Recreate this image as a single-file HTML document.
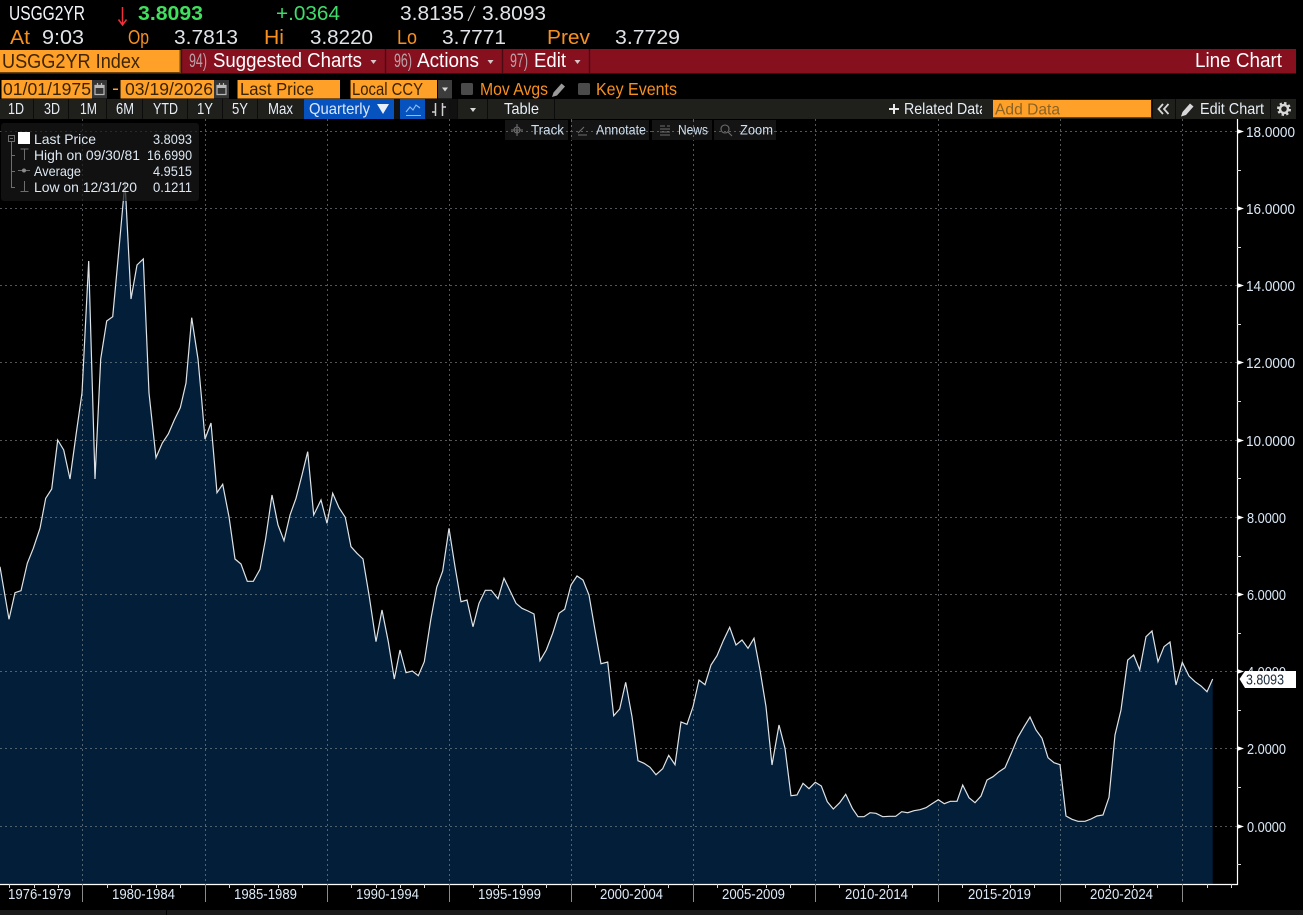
<!DOCTYPE html>
<html><head><meta charset="utf-8"><style>
html,body{margin:0;padding:0;background:#000;overflow:hidden}
svg{display:block}
text{font-family:"Liberation Sans",sans-serif}
</style></head><body>
<svg width="1303" height="915" viewBox="0 0 1303 915" xmlns="http://www.w3.org/2000/svg">
<defs><clipPath id="rd"><rect x="900" y="99" width="82" height="20"/></clipPath></defs>
<rect width="1303" height="915" fill="#000"/>

<!-- chart fill -->
<polygon fill="#021e39" points="0,884 0,566.7 9,619.3 15,592.7 21,590.7 27.3,563.3 33.3,548.3 40,528.3 45.7,498.3 51.7,489 57.7,440 63.7,450 70,479 76,435 82,393 88.7,261 95,479 100.7,359 106.7,321 112.7,316.7 118.7,252 125,181.7 131,299 137,265 143.3,259 149,393 156,457.7 162.3,443 168.3,434 174.3,420 180.3,407.7 186,383 191.7,317.7 198,359 201.7,400 205,439 211,423 217,492.7 222.7,484.3 229,516.7 235,559 241,564 247.3,581.3 253.3,581.3 260,569.3 265.7,538.3 272,495 278,525 284,540.7 290,515 296,498.3 302,475 307.7,451.7 313.7,515 321,500 327,523.3 332.7,493.3 339,507.7 345.3,517.3 351,546.7 357,553.3 363,559 369.3,596.7 376,641.7 382,610 388.3,641.7 394.3,679 400,650 406,672.7 412.3,671 418.3,675.7 424.3,661.7 430.7,620 436.7,587.3 442.7,571 449,528.3 455,566.7 461,601.7 467,600 473,626.7 479,603.3 485.3,590.3 491.3,590.3 498,598.7 504,578.3 510,590.7 516,603.3 522,608.3 528,611 534,614 540,660.7 546.3,650 552.7,633.3 559,613.3 564.7,609.3 571,585 577,576 583,580 589,595 595,630 601,663.7 607.7,662 613.7,715.7 619.7,709 625.7,682.3 632,716.7 638,760.7 644,763.3 650,767.3 656,774.7 662.7,768.7 668.7,755.3 675,764.7 681,722 687,724.3 693,706.7 699,680 705,684.7 711,665 717,655.7 723.3,640.7 729.7,627.3 736,645 742,640 748,648.3 754,638.3 760,670 766,706.7 772,765 779,725 785,748.3 791,795.7 797,795 803,783.3 809,788.7 815.3,782.3 821.3,786 827.3,801.7 833.3,809 839.7,802.7 845.7,794.3 852.3,808.3 858,816.7 864,816.7 870,812.7 876,813.3 882.7,816.7 889.3,816.3 895.7,816.3 901.7,811.7 907.7,812.7 914,810.7 920,809.7 926,807.7 932,803.7 938.3,799.7 944.3,803.7 950.3,801.3 957,801.3 962.7,785 969,797.7 975,802.7 981,796 987,780 993,776.7 999,771.7 1005,767.7 1011.3,753.3 1017.7,737.7 1023.7,727.3 1030,717 1036,730 1042,738.3 1048,757.7 1054,762.7 1060,764.7 1066,816 1072,819.3 1078,821.3 1085,821.3 1091,819 1097,816 1103,815 1109,797.3 1115,735 1121,710 1127.7,660 1133.7,655 1139.7,670 1146,636.7 1152,631 1158,661.7 1164,646.7 1170,642 1176,685 1182.3,662.3 1189,676 1195,681.7 1201,686 1207,691.7 1212.7,679 1212.7,884"/>

<!-- grid -->
<g stroke="#8a8f94" stroke-opacity=".6" stroke-width="1" stroke-dasharray="2 3" fill="none">
<path d="M0 131.5H1237M0 208.5H1237M0 285.5H1237M0 362.5H1237M0 440.5H1237M0 517.5H1237M0 594.5H1237M0 671.5H1237M0 748.5H1237M0 826.5H1237"/>
<path d="M82.5 119V884M205.5 119V884M327.5 119V884M449.5 119V884M571.5 119V884M693.5 119V884M815.5 119V884M938.5 119V884M1060.5 119V884M1182.5 119V884"/>
</g>

<!-- line -->
<polyline fill="none" stroke="#dfe3e6" stroke-width="1.2" stroke-linejoin="miter" points="0,566.7 9,619.3 15,592.7 21,590.7 27.3,563.3 33.3,548.3 40,528.3 45.7,498.3 51.7,489 57.7,440 63.7,450 70,479 76,435 82,393 88.7,261 95,479 100.7,359 106.7,321 112.7,316.7 118.7,252 125,181.7 131,299 137,265 143.3,259 149,393 156,457.7 162.3,443 168.3,434 174.3,420 180.3,407.7 186,383 191.7,317.7 198,359 201.7,400 205,439 211,423 217,492.7 222.7,484.3 229,516.7 235,559 241,564 247.3,581.3 253.3,581.3 260,569.3 265.7,538.3 272,495 278,525 284,540.7 290,515 296,498.3 302,475 307.7,451.7 313.7,515 321,500 327,523.3 332.7,493.3 339,507.7 345.3,517.3 351,546.7 357,553.3 363,559 369.3,596.7 376,641.7 382,610 388.3,641.7 394.3,679 400,650 406,672.7 412.3,671 418.3,675.7 424.3,661.7 430.7,620 436.7,587.3 442.7,571 449,528.3 455,566.7 461,601.7 467,600 473,626.7 479,603.3 485.3,590.3 491.3,590.3 498,598.7 504,578.3 510,590.7 516,603.3 522,608.3 528,611 534,614 540,660.7 546.3,650 552.7,633.3 559,613.3 564.7,609.3 571,585 577,576 583,580 589,595 595,630 601,663.7 607.7,662 613.7,715.7 619.7,709 625.7,682.3 632,716.7 638,760.7 644,763.3 650,767.3 656,774.7 662.7,768.7 668.7,755.3 675,764.7 681,722 687,724.3 693,706.7 699,680 705,684.7 711,665 717,655.7 723.3,640.7 729.7,627.3 736,645 742,640 748,648.3 754,638.3 760,670 766,706.7 772,765 779,725 785,748.3 791,795.7 797,795 803,783.3 809,788.7 815.3,782.3 821.3,786 827.3,801.7 833.3,809 839.7,802.7 845.7,794.3 852.3,808.3 858,816.7 864,816.7 870,812.7 876,813.3 882.7,816.7 889.3,816.3 895.7,816.3 901.7,811.7 907.7,812.7 914,810.7 920,809.7 926,807.7 932,803.7 938.3,799.7 944.3,803.7 950.3,801.3 957,801.3 962.7,785 969,797.7 975,802.7 981,796 987,780 993,776.7 999,771.7 1005,767.7 1011.3,753.3 1017.7,737.7 1023.7,727.3 1030,717 1036,730 1042,738.3 1048,757.7 1054,762.7 1060,764.7 1066,816 1072,819.3 1078,821.3 1085,821.3 1091,819 1097,816 1103,815 1109,797.3 1115,735 1121,710 1127.7,660 1133.7,655 1139.7,670 1146,636.7 1152,631 1158,661.7 1164,646.7 1170,642 1176,685 1182.3,662.3 1189,676 1195,681.7 1201,686 1207,691.7 1212.7,679"/>

<!-- axes -->
<path d="M1237.5 119V884.5H0" stroke="#fff" stroke-width="1.2" fill="none"/>
<g stroke="#d8d8d8" stroke-width="1" fill="none">
<path d="M1237 170.5h4M1237 247.5h4M1237 324.5h4M1237 401.5h4M1237 478.5h4M1237 556.5h4M1237 633.5h4M1237 710.5h4M1237 787.5h4M1237 864.5h4"/>
<path d="M9.5 884v4M34.5 884v4M58.5 884v4M107.5 884v4M131.5 884v4M156.5 884v4M180.5 884v4M229.5 884v4M254.5 884v4M278.5 884v4M302.5 884v4M351.5 884v4M376.5 884v4M400.5 884v4M424.5 884v4M473.5 884v4M498.5 884v4M522.5 884v4M546.5 884v4M595.5 884v4M620.5 884v4M644.5 884v4M668.5 884v4M717.5 884v4M742.5 884v4M766.5 884v4M790.5 884v4M839.5 884v4M864.5 884v4M888.5 884v4M912.5 884v4M962.5 884v4M986.5 884v4M1010.5 884v4M1034.5 884v4M1085.5 884v4M1109.5 884v4M1133.5 884v4M1157.5 884v4M1207.5 884v4M1231.5 884v4"/>
</g>
<path d="M82.5 884V902M205.5 884V902M327.5 884V902M449.5 884V902M571.5 884V902M693.5 884V902M815.5 884V902M938.5 884V902M1060.5 884V902M1182.5 884V902" stroke="#8a8a8a" stroke-width="1" fill="none"/>
<g fill="#fff">
<path d="M1237 129l7 2.5-7 2.5zM1237 206l7 2.5-7 2.5zM1237 283l7 2.5-7 2.5zM1237 360l7 2.5-7 2.5zM1237 438l7 2.5-7 2.5zM1237 515l7 2.5-7 2.5zM1237 592l7 2.5-7 2.5zM1237 669l7 2.5-7 2.5zM1237 746l7 2.5-7 2.5zM1237 824l7 2.5-7 2.5z"/>
</g>
<g fill="#dbe9f7" font-size="14.5">
<text x="1246" y="137" textLength="49" lengthAdjust="spacingAndGlyphs">18.0000</text>
<text x="1246" y="214" textLength="49" lengthAdjust="spacingAndGlyphs">16.0000</text>
<text x="1246" y="291" textLength="49" lengthAdjust="spacingAndGlyphs">14.0000</text>
<text x="1246" y="368" textLength="49" lengthAdjust="spacingAndGlyphs">12.0000</text>
<text x="1246" y="446" textLength="49" lengthAdjust="spacingAndGlyphs">10.0000</text>
<text x="1247" y="523" textLength="39" lengthAdjust="spacingAndGlyphs">8.0000</text>
<text x="1247" y="600" textLength="39" lengthAdjust="spacingAndGlyphs">6.0000</text>
<text x="1247" y="677" textLength="39" lengthAdjust="spacingAndGlyphs">4.0000</text>
<text x="1247" y="754" textLength="39" lengthAdjust="spacingAndGlyphs">2.0000</text>
<text x="1247" y="832" textLength="39" lengthAdjust="spacingAndGlyphs">0.0000</text>
</g>
<polygon points="1239.5,679 1245,671 1296,671 1296,688 1245,688" fill="#fff"/>
<text x="1246" y="684.5" font-size="14.5" fill="#1a2a3a" textLength="38" lengthAdjust="spacingAndGlyphs">3.8093</text>

<g fill="#dbe9f7" font-size="14.5">
<text x="8" y="899" textLength="63" lengthAdjust="spacingAndGlyphs">1976-1979</text>
<text x="112" y="899" textLength="63" lengthAdjust="spacingAndGlyphs">1980-1984</text>
<text x="234" y="899" textLength="63" lengthAdjust="spacingAndGlyphs">1985-1989</text>
<text x="356" y="899" textLength="63" lengthAdjust="spacingAndGlyphs">1990-1994</text>
<text x="478" y="899" textLength="63" lengthAdjust="spacingAndGlyphs">1995-1999</text>
<text x="600" y="899" textLength="63" lengthAdjust="spacingAndGlyphs">2000-2004</text>
<text x="722" y="899" textLength="63" lengthAdjust="spacingAndGlyphs">2005-2009</text>
<text x="845" y="899" textLength="63" lengthAdjust="spacingAndGlyphs">2010-2014</text>
<text x="968" y="899" textLength="63" lengthAdjust="spacingAndGlyphs">2015-2019</text>
<text x="1090" y="899" textLength="63" lengthAdjust="spacingAndGlyphs">2020-2024</text>
</g>
<rect x="0" y="910" width="1303" height="5" fill="#1b1b1b"/>
<rect x="166" y="910" width="1" height="5" fill="#000"/>

<!-- row 1 -->
<g font-size="20">
<text x="9" y="20" fill="#f2f6fb" textLength="76" lengthAdjust="spacingAndGlyphs">USGG2YR</text>
<path d="M122.5 7V24M118.5 19.5l4 5.5 4-5.5" stroke="#f0303a" stroke-width="1.5" fill="none"/>
<text x="138" y="20" fill="#3fe05c" font-weight="bold" font-size="20" textLength="65" lengthAdjust="spacingAndGlyphs">3.8093</text>
<text x="276" y="20" fill="#3fdc6c" textLength="64" lengthAdjust="spacingAndGlyphs">+.0364</text>
<text x="400" y="20" fill="#e0e4e8" textLength="64" lengthAdjust="spacingAndGlyphs">3.8135</text>
<path d="M468 21L475 6" stroke="#d0d4d8" stroke-width="1.1"/>
<text x="482" y="20" fill="#e0e4e8" textLength="64" lengthAdjust="spacingAndGlyphs">3.8093</text>
</g>
<!-- row 2 -->
<g font-size="20" fill="#f8901f">
<text x="10" y="44" textLength="20" lengthAdjust="spacingAndGlyphs">At</text>
<text x="128" y="44" textLength="21" lengthAdjust="spacingAndGlyphs">Op</text>
<text x="264" y="44" textLength="20" lengthAdjust="spacingAndGlyphs">Hi</text>
<text x="397" y="44" textLength="20" lengthAdjust="spacingAndGlyphs">Lo</text>
<text x="547" y="44" textLength="43" lengthAdjust="spacingAndGlyphs">Prev</text>
</g>
<g font-size="20" fill="#e0e4e8">
<text x="42" y="44" textLength="42" lengthAdjust="spacingAndGlyphs">9:03</text>
<text x="174" y="44" textLength="64" lengthAdjust="spacingAndGlyphs">3.7813</text>
<text x="310" y="44" textLength="63" lengthAdjust="spacingAndGlyphs">3.8220</text>
<text x="442" y="44" textLength="64" lengthAdjust="spacingAndGlyphs">3.7771</text>
<text x="615" y="44" textLength="65" lengthAdjust="spacingAndGlyphs">3.7729</text>
</g>

<!-- row 3 -->
<rect x="181" y="49" width="1115" height="24.5" fill="#87101f"/>
<path d="M181.5 49V74M385.5 49V74M502.5 49V74M589.5 49V74" stroke="#4a0a12" stroke-width="1.4"/>
<rect x="0" y="50" width="181" height="23.5" fill="#6d4410"/>
<rect x="0" y="50" width="179.5" height="22" fill="#ffa128"/>
<text x="2" y="68" font-size="20" fill="#3f2500" textLength="138" lengthAdjust="spacingAndGlyphs">USGG2YR Index</text>
<g font-size="20" fill="#fff">
<text x="213" y="67" textLength="149" lengthAdjust="spacingAndGlyphs">Suggested Charts</text>
<text x="417" y="67" textLength="62" lengthAdjust="spacingAndGlyphs">Actions</text>
<text x="534" y="67" textLength="32" lengthAdjust="spacingAndGlyphs">Edit</text>
<text x="1195" y="67" textLength="87" lengthAdjust="spacingAndGlyphs">Line Chart</text>
</g>
<g font-size="19" fill="#b9a0a6">
<text x="189" y="67" textLength="18" lengthAdjust="spacingAndGlyphs">94)</text>
<text x="394" y="67" textLength="18" lengthAdjust="spacingAndGlyphs">96)</text>
<text x="510" y="67" textLength="18" lengthAdjust="spacingAndGlyphs">97)</text>
</g>
<path d="M370.5 60h6l-3 4zM487.5 60h6l-3 4zM574.5 60h6l-3 4z" fill="#d8c8cc"/>

<!-- row 4 -->
<g fill="#ffa128">
<rect x="1" y="80" width="91" height="18.5"/>
<rect x="120" y="80" width="94" height="18.5"/>
<rect x="237" y="80" width="103" height="18.5"/>
<rect x="350" y="80" width="87" height="18.5"/>
</g>
<path d="M1.5 80V98.5M120.5 80V98.5M237.5 80V98.5M350.5 80V98.5" stroke="#7a4c10"/>
<g font-size="17.5" fill="#3a2300">
<text x="3" y="95" textLength="88" lengthAdjust="spacingAndGlyphs">01/01/1975</text>
<text x="125" y="95" textLength="88" lengthAdjust="spacingAndGlyphs">03/19/2026</text>
<text x="240" y="95" textLength="74" lengthAdjust="spacingAndGlyphs">Last Price</text>
<text x="352" y="95" textLength="71" lengthAdjust="spacingAndGlyphs">Local CCY</text>
</g>
<rect x="92" y="80" width="15" height="18.5" fill="#353535"/>
<rect x="214" y="80" width="15" height="18.5" fill="#353535"/>
<rect x="438" y="80" width="14" height="18.5" fill="#3c3c3c"/>
<g fill="none" stroke="#b8b8b8" stroke-width="1.2">
<path d="M95 85.500h9v9h-9zM97.500 83v2.500M101.500 83v2.500"/>
<path d="M217 85.500h9v9h-9zM219.500 83v2.500M223.500 83v2.500"/>
</g>
<path d="M95 85.500h9v2.500h-9zM217 85.500h9v2.500h-9z" fill="#b8b8b8"/>
<path d="M442 87.5h6l-3 4z" fill="#d8d8d8"/>
<rect x="113" y="88.500" width="5" height="1.500" fill="#ffa128"/>
<rect x="461" y="83" width="12" height="12" rx="1.500" fill="#4a4a4a"/>
<rect x="578" y="83" width="12" height="12" rx="1.500" fill="#4a4a4a"/>
<g font-size="17.5" fill="#f8901f">
<text x="480" y="95" textLength="68" lengthAdjust="spacingAndGlyphs">Mov Avgs</text>
<text x="596" y="95" textLength="81" lengthAdjust="spacingAndGlyphs">Key Events</text>
</g>
<path d="M552 97l1.500-4.500 8-9 3.500 3-8 9z" fill="#9a9a9a"/>

<!-- row 5 -->
<rect x="0" y="99" width="1296" height="20" fill="#1f1f1c"/>
<path d="M33.500 99V119M68.500 99V119M106.500 99V119M142.500 99V119M187.500 99V119M222.500 99V119M257.500 99V119M457.500 99V119M487.500 99V119M554.500 99V119" stroke="#0c0c0c" stroke-width="1"/>
<rect x="304" y="99" width="90" height="20" fill="#0652bf"/>
<rect x="400" y="99" width="25" height="20" fill="#0652bf"/>
<rect x="394" y="99" width="6" height="20" fill="#111"/>
<rect x="449" y="99" width="8" height="20" fill="#111"/>
<rect x="425" y="99" width="24" height="20" fill="#141414"/>
<g font-size="16" fill="#e6eef6">
<text x="8" y="114" textLength="16" lengthAdjust="spacingAndGlyphs">1D</text>
<text x="44" y="114" textLength="16" lengthAdjust="spacingAndGlyphs">3D</text>
<text x="80" y="114" textLength="17" lengthAdjust="spacingAndGlyphs">1M</text>
<text x="116" y="114" textLength="18" lengthAdjust="spacingAndGlyphs">6M</text>
<text x="153" y="114" textLength="25" lengthAdjust="spacingAndGlyphs">YTD</text>
<text x="197" y="114" textLength="16" lengthAdjust="spacingAndGlyphs">1Y</text>
<text x="232" y="114" textLength="16" lengthAdjust="spacingAndGlyphs">5Y</text>
<text x="268" y="114" textLength="25" lengthAdjust="spacingAndGlyphs">Max</text>
<text x="504" y="114" textLength="35" lengthAdjust="spacingAndGlyphs">Table</text>
<text x="904" y="114" textLength="83" lengthAdjust="spacingAndGlyphs" clip-path="url(#rd)">Related Data</text>
<text x="1200" y="114" textLength="64" lengthAdjust="spacingAndGlyphs">Edit Chart</text>
</g>
<text x="309" y="114" font-size="16" fill="#dce8f8" textLength="61" lengthAdjust="spacingAndGlyphs">Quarterly</text>
<path d="M377 104h12l-6 10z" fill="#e8f0fa"/>
<path d="M406 112l4-5 3 3 3-5 4 3M406 115.500h15" stroke="#8cc0f0" stroke-width="1.100" fill="none"/>
<path d="M435.500 103V116M442.500 103V116M432 112h3.500M442.500 107H446" stroke="#d0d0d0" stroke-width="1.500" fill="none"/>
<path d="M470 108h6l-3 4z" fill="#d8d8d8"/>
<path d="M889 109h10M894 104v10" stroke="#e8e8e8" stroke-width="2"/>
<rect x="993" y="100" width="158" height="18" fill="#ffa128"/>
<rect x="993" y="117" width="158" height="1" fill="#6d4410"/>
<text x="995" y="114.500" font-size="16" fill="#8a6226" textLength="65" lengthAdjust="spacingAndGlyphs">Add Data</text>
<rect x="1152" y="99" width="1" height="20" fill="#0c0c0c"/>
<rect x="1175" y="99" width="1" height="20" fill="#0c0c0c"/>
<rect x="1270" y="99" width="1" height="20" fill="#0c0c0c"/>
<path d="M1163 104l-4.500 5 4.500 5M1168.500 104l-4.500 5 4.500 5" stroke="#d8d8d8" stroke-width="1.800" fill="none"/>
<path d="M1181 116.500l1.500-4.500 7.500-8.500 3.500 3-7.500 8.500z" fill="#d8d8d8"/>
<circle cx="1284" cy="109" r="4" fill="none" stroke="#d8d8d8" stroke-width="2.500"/>
<circle cx="1284" cy="109" r="6" fill="none" stroke="#d8d8d8" stroke-width="2" stroke-dasharray="2.400 2.300"/>

<!-- floating toolbar -->
<g fill="#141414">
<rect x="505" y="120" width="63" height="20"/>
<rect x="571" y="120" width="78" height="20"/>
<rect x="652" y="120" width="60" height="20"/>
<rect x="714" y="120" width="62" height="20"/>
</g>
<path d="M506 131.500h62M571 131.500h78M652 131.500h60M714 131.500h62" stroke="#5a5a5a" stroke-dasharray="2 3"/>
<path d="M571.500 120V140" stroke="#666" stroke-dasharray="2 3"/>
<path d="M693.500 120V140" stroke="#666" stroke-dasharray="2 3"/>
<g font-size="14" fill="#cfe0f0">
<text x="531" y="134.500" textLength="33" lengthAdjust="spacingAndGlyphs">Track</text>
<text x="596" y="134.500" textLength="50" lengthAdjust="spacingAndGlyphs">Annotate</text>
<text x="678" y="134.500" textLength="30" lengthAdjust="spacingAndGlyphs">News</text>
<text x="740" y="134.500" textLength="33" lengthAdjust="spacingAndGlyphs">Zoom</text>
</g>
<g stroke="#6e6e6e" fill="none" stroke-width="1.100">
<circle cx="517" cy="130" r="3"/><path d="M511 130h12M517 124v12"/>
<path d="M578 135h9M578 133l6-6"/>
<path d="M660 126h5M667 126h3M660 129h10M660 132h10M660 135h10"/>
<circle cx="725" cy="129" r="4"/><path d="M728 132l4 4"/>
</g>

<!-- legend -->
<rect x="1" y="123" width="198" height="78" rx="3" fill="#181818" fill-opacity=".72"/>
<g stroke="#6e6e6e" fill="none" stroke-width="1">
<rect x="8.500" y="135.500" width="6" height="6"/><path d="M10 138.500h3"/>
<path d="M11.500 142V187.500H15M11.500 155.500H15M11.500 171.500H15"/>
<path d="M20.500 149h8M24.500 149v11"/>
<path d="M18 170.500h12"/>
<path d="M24.500 181v11M20.500 191.500h8"/>
</g>
<circle cx="24" cy="170.500" r="2" fill="#8a8a8a"/>
<rect x="18" y="132" width="12" height="12" fill="#fff"/>
<g font-size="14" fill="#dde8f3">
<text x="34" y="144" textLength="62" lengthAdjust="spacingAndGlyphs">Last Price</text>
<text x="153" y="144" textLength="39" lengthAdjust="spacingAndGlyphs">3.8093</text>
<text x="34" y="160" textLength="106" lengthAdjust="spacingAndGlyphs">High on 09/30/81</text>
<text x="147" y="160" textLength="45" lengthAdjust="spacingAndGlyphs">16.6990</text>
<text x="34" y="176" textLength="47" lengthAdjust="spacingAndGlyphs">Average</text>
<text x="153" y="176" textLength="39" lengthAdjust="spacingAndGlyphs">4.9515</text>
<text x="34" y="192" textLength="103" lengthAdjust="spacingAndGlyphs">Low on 12/31/20</text>
<text x="153" y="192" textLength="39" lengthAdjust="spacingAndGlyphs">0.1211</text>
</g>
</svg>
</body></html>
